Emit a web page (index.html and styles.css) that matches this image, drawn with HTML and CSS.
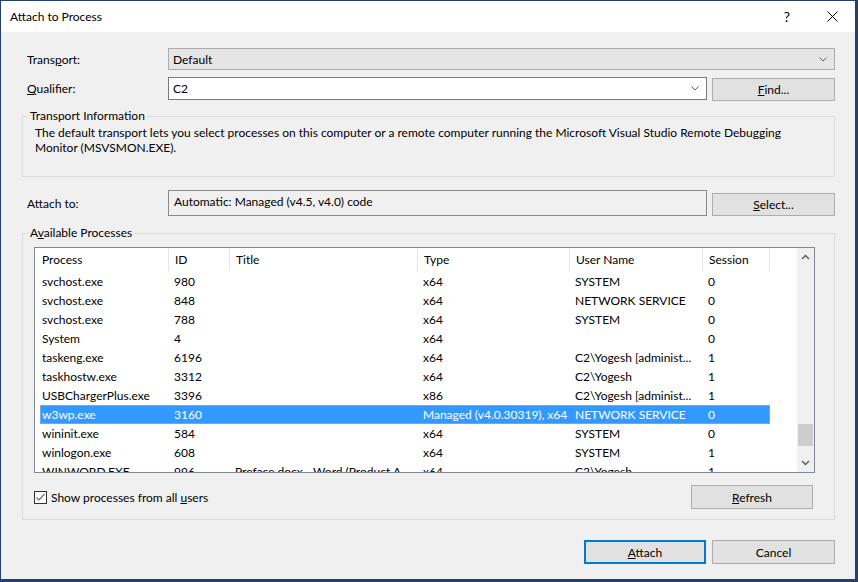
FILE: index.html
```html
<!DOCTYPE html>
<html>
<head>
    <link rel="stylesheet" href="styles.css">
</head>
<body>
    <div class="window">
        <div class="titlebar">
            <span class="title">Attach to Process</span>
            <span class="help">?</span>
            <svg class="close" width="11" height="11" viewBox="0 0 11 11"><path d="M0.5 0.5 L10.5 10.5 M10.5 0.5 L0.5 10.5" stroke="#000" stroke-width="1" fill="none"/></svg>
        </div>

        <div class="content">
            <div class="row">
                <label class="lbl">Trans<u>p</u>ort:</label>
                <div class="combo combo-ro">
                    <span>Default</span>
                    <svg class="chev" width="8" height="5" viewBox="0 0 8 5"><path d="M0.5 0.5 L4 4 L7.5 0.5" stroke="#606060" fill="none"/></svg>
                </div>
            </div>

            <div class="row row-qualifier">
                <label class="lbl"><u>Q</u>ualifier:</label>
                <div class="combo combo-edit">
                    <span>C2</span>
                    <svg class="chev" width="8" height="5" viewBox="0 0 8 5"><path d="M0.5 0.5 L4 4 L7.5 0.5" stroke="#606060" fill="none"/></svg>
                </div>
                <button class="btn btn-side"><u>F</u>ind...</button>
            </div>

            <fieldset class="group group-info">
                <legend>Transport Information</legend>
                <p>The default transport lets you select processes on this computer or a remote computer running the Microsoft Visual Studio Remote Debugging Monitor (MSVSMON.EXE).</p>
            </fieldset>

            <div class="row row-attach">
                <label class="lbl">Attach to:</label>
                <div class="attach-box">Automatic: Managed (v4.5, v4.0) code</div>
                <button class="btn btn-side"><u>S</u>elect...</button>
            </div>

            <fieldset class="group group-procs">
                <legend>A<u>v</u>ailable Processes</legend>
                <div class="list">
                    <div class="list-main">
                        <div class="list-head">
                            <div class="hcell first">Process</div>
                            <div class="hcell">ID</div>
                            <div class="hcell">Title</div>
                            <div class="hcell">Type</div>
                            <div class="hcell">User Name</div>
                            <div class="hcell">Session</div>
                        </div>
                        <div class="list-body">
                            <div class="prow"><span>svchost.exe</span><span>980</span><span></span><span>x64</span><span>SYSTEM</span><span>0</span></div>
                            <div class="prow"><span>svchost.exe</span><span>848</span><span></span><span>x64</span><span>NETWORK SERVICE</span><span>0</span></div>
                            <div class="prow"><span>svchost.exe</span><span>788</span><span></span><span>x64</span><span>SYSTEM</span><span>0</span></div>
                            <div class="prow"><span>System</span><span>4</span><span></span><span>x64</span><span></span><span>0</span></div>
                            <div class="prow"><span>taskeng.exe</span><span>6196</span><span></span><span>x64</span><span>C2\Yogesh [administ...</span><span>1</span></div>
                            <div class="prow"><span>taskhostw.exe</span><span>3312</span><span></span><span>x64</span><span>C2\Yogesh</span><span>1</span></div>
                            <div class="prow"><span>USBChargerPlus.exe</span><span>3396</span><span></span><span>x86</span><span>C2\Yogesh [administ...</span><span>1</span></div>
                            <div class="prow selected"><span>w3wp.exe</span><span>3160</span><span></span><span>Managed (v4.0.30319), x64</span><span>NETWORK SERVICE</span><span>0</span></div>
                            <div class="prow"><span>wininit.exe</span><span>584</span><span></span><span>x64</span><span>SYSTEM</span><span>0</span></div>
                            <div class="prow"><span>winlogon.exe</span><span>608</span><span></span><span>x64</span><span>SYSTEM</span><span>1</span></div>
                            <div class="prow"><span>WINWORD.EXE</span><span>996</span><span>Preface.docx - Word (Product A</span><span>x64</span><span>C2\Yogesh</span><span>1</span></div>
                        </div>
                    </div>
                    <div class="scrollbar">
                        <svg width="9" height="6" viewBox="0 0 9 6"><path d="M1 5 L4.5 1.5 L8 5" stroke="#606060" stroke-width="1.5" fill="none"/></svg>
                        <div class="track"><div class="thumb"></div></div>
                        <svg width="9" height="6" viewBox="0 0 9 6"><path d="M1 1 L4.5 4.5 L8 1" stroke="#606060" stroke-width="1.5" fill="none"/></svg>
                    </div>
                </div>
                <div class="procs-foot">
                    <label class="check">
                        <span class="box"><svg width="11" height="11" viewBox="0 0 11 11"><path d="M1.5 5.5 L4 8 L9.5 2" stroke="#6d6d6d" stroke-width="1.2" fill="none"/></svg></span>
                        <span>Show processes from all <u>u</u>sers</span>
                    </label>
                    <button class="btn btn-refresh"><u>R</u>efresh</button>
                </div>
            </fieldset>

            <div class="actions">
                <button class="btn btn-primary"><u>A</u>ttach</button>
                <button class="btn">Cancel</button>
            </div>
        </div>
    </div>
</body>
</html>
```

FILE: styles.css
```css
/* Fenetre de dialogue */
body {
  margin: 0;
  background-color: #f0f0f0;
  font-family: Lato, "Liberation Sans", sans-serif;
  font-size: 12px;
  color: #000;
}

.window {
  width: 858px;
  height: 582px;
  box-sizing: border-box;
  border: 1px solid #22406a;
  border-right-width: 3px;
  border-bottom-width: 3px;
  background-color: #f0f0f0;
  display: flex;
  flex-direction: column;
}

/* Barre de titre */
.titlebar {
  height: 31px;
  flex-shrink: 0;
  background-color: #fff;
  display: flex;
  align-items: center;
  padding-left: 9px;
}

.title {
  flex: 1;
}

.help {
  font-size: 14px;
  margin-right: 37px;
}

.close {
  margin-right: 17px;
}

/* Contenu */
.content {
  padding: 16px 20px 0 21px;
}

.row {
  display: flex;
  align-items: center;
}

.lbl {
  width: 146px;
  flex-shrink: 0;
  box-sizing: border-box;
  padding-left: 5px;
}

.combo {
  height: 22px;
  box-sizing: border-box;
  display: flex;
  align-items: center;
  justify-content: space-between;
  padding: 0 7px 0 4px;
}

.combo-ro {
  flex: 1;
  background-color: #e5e5e5;
  border: 1px solid #acacac;
}

.row-qualifier {
  margin-top: 7px;
  align-items: flex-start;
}

.row-qualifier .lbl {
  line-height: 23px;
}

.combo-edit {
  width: 539px;
  height: 23px;
  background-color: #fff;
  border: 1px solid #7a7a7a;
  padding-right: 7px;
}

.btn {
  font-family: inherit;
  font-size: 12px;
  color: #000;
  background-color: #e1e1e1;
  border: 1px solid #adadad;
  height: 24px;
  width: 122px;
  padding: 0;
  box-sizing: border-box;
}

.btn-side {
  width: 123px;
  height: 23px;
  margin-left: 5px;
  margin-top: 1px;
}

/* Cadres de groupe */
.group {
  margin: 0;
  border: 1px solid #dcdcdc;
  padding: 0;
  min-width: 0;
}

.group legend {
  padding: 0 2px 0 2px;
  line-height: 16px;
}

.group-info {
  margin-top: 7px;
  padding: 1px 10px 21px 12px;
}

.group-info legend {
  margin-left: -7px;
}

.group-info p {
  margin: 0;
  line-height: 15px;
}

.row-attach {
  margin-top: 13px;
  align-items: flex-end;
}

.row-attach .lbl {
  align-self: center;
}

.attach-box {
  width: 539px;
  height: 26px;
  box-sizing: border-box;
  border: 1px solid #8a8a8a;
  padding-left: 5px;
  line-height: 22px;
}

.row-attach .btn-side {
  margin-top: 0;
}

.group-procs {
  margin-top: 9px;
  padding: 6px 19px 10px 11px;
}

.group-procs legend {
  margin-left: -6px;
}

/* Liste des processus */
.list {
  height: 226px;
  box-sizing: border-box;
  border: 1px solid #828790;
  background-color: #fff;
  display: flex;
  overflow: hidden;
}

.list-main {
  flex: 1;
  overflow: hidden;
}

.list-head {
  display: grid;
  grid-template-columns: 134px 61px 188px 152px 133px 67px;
  height: 24px;
}

.hcell {
  border-right: 1px solid #e5e5e5;
  padding-left: 6px;
  line-height: 23px;
  height: 23px;
}

.hcell.first {
  padding-left: 7px;
}

.prow {
  display: grid;
  grid-template-columns: 129px 61px 188px 152px 133px 67px;
  margin-left: 5px;
  width: 730px;
  height: 19px;
  line-height: 19px;
}

.prow span {
  padding-left: 5px;
  white-space: nowrap;
  overflow: hidden;
}

.prow span:first-child {
  padding-left: 2px;
}

.prow.selected {
  background-color: #3399ff;
  color: #fff;
  outline: 1px solid #7aa7da;
  outline-offset: -1px;
}

.scrollbar {
  width: 17px;
  flex-shrink: 0;
  background-color: #f0f0f0;
  display: flex;
  flex-direction: column;
  align-items: center;
}

.scrollbar svg {
  margin: 6px 0;
}

.track {
  flex: 1;
  width: 100%;
  display: flex;
  flex-direction: column;
  justify-content: flex-end;
  padding-bottom: 8px;
}

.thumb {
  height: 22px;
  margin: 0 1px;
  background-color: #cdcdcd;
}

.procs-foot {
  display: flex;
  justify-content: space-between;
  align-items: center;
  margin-top: 12px;
}

.check {
  display: flex;
  align-items: center;
  gap: 4px;
}

.box {
  width: 13px;
  height: 13px;
  box-sizing: border-box;
  border: 1px solid #333;
  background-color: #fff;
  display: flex;
  align-items: center;
  justify-content: center;
}

.btn-refresh {
  width: 122px;
  margin-right: 2px;
}

/* Boutons du bas */
.actions {
  display: flex;
  justify-content: flex-end;
  gap: 6px;
  margin-top: 20px;
}

.actions .btn {
  width: 122px;
}

.actions .btn:last-child {
  width: 123px;
}

.btn-primary {
  border: 2px solid #0078d7;
}
```
